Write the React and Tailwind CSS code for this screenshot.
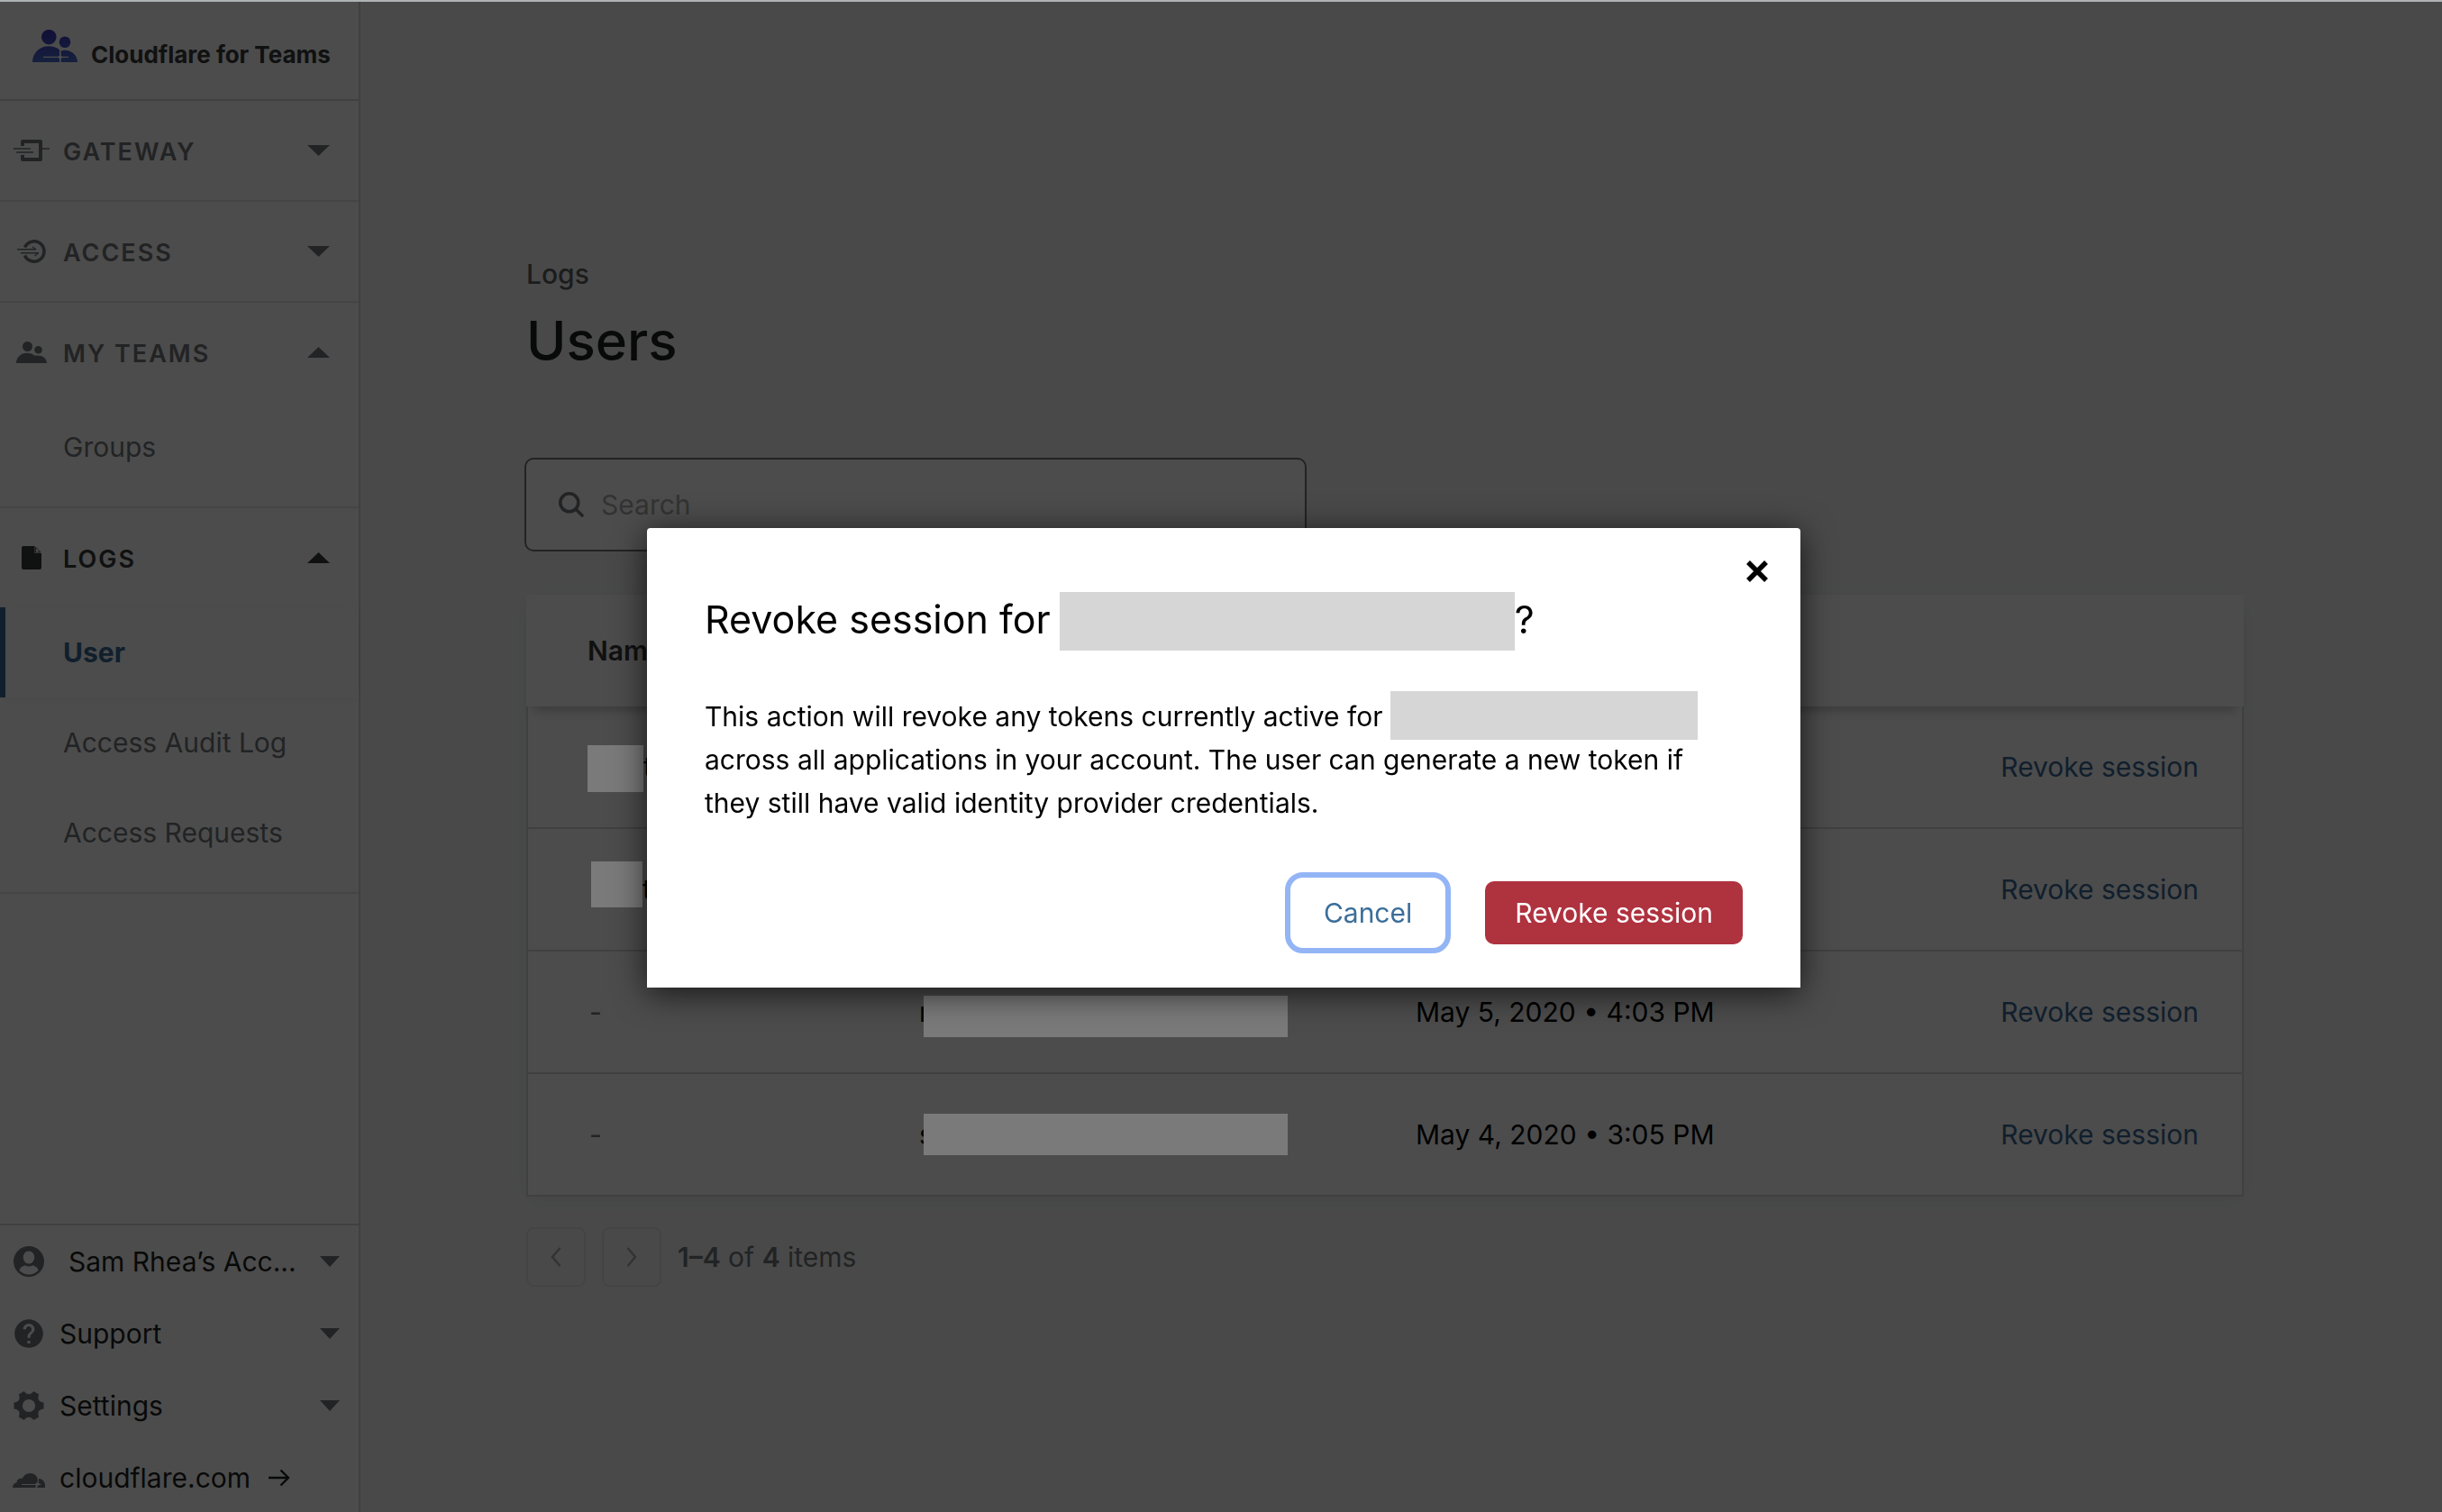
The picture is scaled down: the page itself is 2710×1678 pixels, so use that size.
import React from "react";
import { MdHelp } from "react-icons/md";

function Logo() {
  return (
    <svg className="mb-2.5 h-9 w-[50px] shrink-0" viewBox="0 0 50 36" aria-hidden="true">
      <defs>
        <linearGradient id="teams" x1="0" y1="0" x2="0" y2="36" gradientUnits="userSpaceOnUse">
          <stop offset="0" stopColor="#3a34b8" />
          <stop offset="1" stopColor="#4a6cd0" />
        </linearGradient>
      </defs>
      <g fill="url(#teams)">
        <circle cx="18.3" cy="8.2" r="8.3" />
        <circle cx="36" cy="13.7" r="6.3" />
        <path
          fillRule="evenodd"
          d="M0 36C0 26 8 18.3 18 18.3c4.600 0 8.800 1.400 12 4V28.500l-1.200 1.200H12v1.300h16.800l1.200 1.200V36zM31.700 36v-3.800l1.200-1.200H40v-1.300h-7.100l-1.200-1.200V23.400c1.300-.4 3-.6 4.300-.6C43.500 22.800 50 28.500 50 36z"
        />
      </g>
    </svg>
  );
}

function GatewayIcon() {
  return (
    <svg className="h-6 w-10" viewBox="0 0 40 24" fill="none" stroke="currentColor" aria-hidden="true">
      <path strokeWidth="4" strokeLinejoin="round" d="M10 7V2h20v20H10v-5" />
      <path strokeWidth="1.500" d="M0 10h19M3 14h19M32 10h8" />
    </svg>
  );
}

function AccessIcon() {
  return (
    <svg className="h-[26px] w-8" viewBox="0 0 32 26" fill="none" stroke="currentColor" aria-hidden="true">
      <path strokeWidth="3.600" d="M8.500 8.500A11.200 11.200 0 1 1 8.500 17.500" />
      <path strokeWidth="1.400" d="M0 10.800h21M4 14.800h20M17 8l4 2.800M19.500 18l4-3.200" />
    </svg>
  );
}

function TeamIcon() {
  return (
    <svg className="h-6 w-[34px]" viewBox="0 0 34 24" fill="currentColor" aria-hidden="true">
      <circle cx="12.500" cy="5.500" r="5.500" />
      <circle cx="24.500" cy="9.300" r="4.300" />
      <path d="M0 24C0 17.500 5.500 12.700 12 12.700c3.500 0 6.500 1 8.700 3C28 14.800 34 18 34 24z" />
    </svg>
  );
}

function FileIcon() {
  return (
    <svg className="h-[26px] w-[22px]" viewBox="0 0 22 26" fill="currentColor" aria-hidden="true">
      <path d="M2 0h12.500v8H22v16a2 2 0 0 1-2 2H2a2 2 0 0 1-2-2V2A2 2 0 0 1 2 0z" />
      <path d="M15.500 1.200V7h5.500z" fill="none" stroke="currentColor" strokeWidth=".8" />
    </svg>
  );
}

function UserIcon() {
  return (
    <svg className="size-[34px]" viewBox="0 0 34 34" fill="currentColor" aria-hidden="true">
      <path
        fillRule="evenodd"
        d="M17 0a17 17 0 1 1 0 34a17 17 0 0 1 0-34zM17 5.500c-3.600 0-6.200 2.900-6.200 6.800s2.600 7.200 6.200 7.200s6.200-3.300 6.200-7.200s-2.600-6.800-6.200-6.800zM6.500 26.700C9 29.800 12.800 31.500 17 31.500s8-1.700 10.500-4.800c-.8-3.200-3.600-4.700-6.500-5.400c-1.200.8-2.500 1.200-4 1.200s-2.800-.4-4-1.200c-2.900.7-5.700 2.200-6.500 5.400z"
      />
    </svg>
  );
}

function GearIcon() {
  return (
    <svg className="size-[34px]" viewBox="-17 -17 34 34" aria-hidden="true">
      <circle r="9.800" fill="none" stroke="currentColor" strokeWidth="5.400" />
      {[0, 60, 120, 180, 240, 300].map((a) => (
        <path key={a} transform={`rotate(${a})`} fill="currentColor" d="M10-6.500l4 2.500 2.500.6v6.800L14 4l-4 2.500z" />
      ))}
    </svg>
  );
}

function CloudIcon() {
  return (
    <svg className="h-4 w-9" viewBox="0 0 36 16" fill="currentColor" aria-hidden="true">
      <path
        fillRule="evenodd"
        d="M0 16c0-3 1.500-5.200 4.500-5.500C4.500 7.500 7 5 10.500 6C12.300 2 15.500 0 19.500 0C24.500 0 28 3.500 28 8.500l-1 2-2 1.500H10v1h15l1 .8-.8 2.200z"
      />
      <path d="M29 6c4 0 7 3.500 7 7.500V16h-9l1-2.500 4-1.200-3.300-1.300z" />
    </svg>
  );
}

function Caret({ up, small }) {
  return (
    <svg className={small ? "h-3 w-[22px]" : "h-3 w-[25px]"} viewBox="0 0 24 12" preserveAspectRatio="none" fill="currentColor" aria-hidden="true">
      <path d={up ? "M0 12L12 0l12 12z" : "M0 0h24L12 12z"} />
    </svg>
  );
}

function Chevron({ right }) {
  return (
    <svg className="h-[22px] w-3" viewBox="0 0 12 22" fill="none" stroke="currentColor" strokeWidth="2.600" aria-hidden="true">
      <path d={right ? "M1.500 1l8.500 10-8.500 10" : "M10.500 1L2 11l8.500 10"} />
    </svg>
  );
}

function Section({ icon, title, open, active, items = [] }) {
  return (
    <section className={"border-b-2 border-[#e6e7e8] " + (open ? "pb-4" : "")}>
      <button
        type="button"
        aria-expanded={!!open}
        className={"flex h-[110px] w-full items-center pr-8 text-left " + (active ? "text-[#36393a]" : "text-[#72777b]")}
      >
        <span className="flex w-[70px] justify-center">{icon}</span>
        <span className="flex-1 pt-[3px] text-[27px] leading-8 font-semibold tracking-[2px]">{title}</span>
        <Caret up={open} />
      </button>
      {items.map((item) => (
        <a
          key={item.label}
          href="#"
          className={
            "flex h-[100px] items-center border-l-6 pl-16 text-[30px] leading-10 " +
            (item.current
              ? "border-[#396896] font-bold text-[#396896] shadow-[0_2px_12px_rgba(0,0,0,0.05)]"
              : "border-transparent text-[#72777b]")
          }
        >
          {item.label}
        </a>
      ))}
    </section>
  );
}

function FooterRow({ icon, label, children }) {
  return (
    <button type="button" className="flex h-10 w-full items-center pr-[21px] pl-3.5 text-left">
      <span className="flex w-9 shrink-0 justify-center text-[#72777b]">{icon}</span>
      {label}
      {children}
    </button>
  );
}

function Sidebar() {
  return (
    <nav className="flex w-[400px] shrink-0 flex-col border-r-2 border-[#d5d7d8] bg-white">
      <a href="#" className="flex h-[110px] items-center gap-[15px] border-b-2 border-[#d5d7d8] pl-9 text-[#36393a]">
        <Logo />
        <span className="pt-2.5 text-[26px] leading-8 font-bold">Cloudflare for Teams</span>
      </a>
      <Section icon={<GatewayIcon />} title="GATEWAY" />
      <Section icon={<AccessIcon />} title="ACCESS" />
      <Section icon={<TeamIcon />} title="MY TEAMS" open items={[{ label: "Groups" }]} />
      <Section
        icon={<FileIcon />}
        title="LOGS"
        open
        active
        items={[{ label: "User", current: true }, { label: "Access Audit Log" }, { label: "Access Requests" }]}
      />
      <div className="mt-auto flex flex-col gap-10 border-t-2 border-[#d5d7d8] pt-5 pb-[18px] text-[30px] leading-10 text-[#1d1f20]">
        <FooterRow icon={<UserIcon />} label={<span className="flex-1 pl-[26px]">Sam Rhea’s Acc...</span>}>
          <span className="text-[#72777b]"><Caret small /></span>
        </FooterRow>
        <FooterRow icon={<MdHelp className="size-[38px] shrink-0" />} label={<span className="flex-1 pl-4">Support</span>}>
          <span className="text-[#72777b]"><Caret small /></span>
        </FooterRow>
        <FooterRow icon={<GearIcon />} label={<span className="flex-1 pl-4">Settings</span>}>
          <span className="text-[#72777b]"><Caret small /></span>
        </FooterRow>
        <a href="#" className="flex h-10 items-center pl-3.5">
          <span className="pt-1.5 text-[#72777b]"><CloudIcon /></span>
          <span className="pr-5 pl-4">cloudflare.com</span>
          <svg className="h-5 w-6" viewBox="0 0 24 20" fill="none" stroke="currentColor" strokeWidth="2.400" aria-hidden="true">
            <path d="M0 10h22M13.500 1.500L22 10l-8.500 8.500" />
          </svg>
        </a>
      </div>
    </nav>
  );
}

/* Blocks that hide private data; they stay visible over the dimmed page. */
function Redacted({ className }) {
  return <span className={"relative z-20 block shrink-0 bg-[#7a7a7a] " + className} />;
}

const rows = [
  { name: <><Redacted className="mt-1 h-[52px] w-[62px]" />t</> },
  { name: <><Redacted className="mb-3 ml-1 h-[51px] w-[57px]" />t</> },
  { name: "-", start: "r", block: "mt-2.5 h-[46px] w-[404px]", date: "May 5, 2020 • 4:03 PM" },
  { name: "-", start: "s", block: "h-[46px] w-[404px]", date: "May 4, 2020 • 3:05 PM" },
];

function UsersTable() {
  return (
    <table className="w-full table-fixed border-separate border-spacing-0 bg-white text-left text-[30px] leading-10 shadow-[0_4px_24px_rgba(0,0,0,0.06)]">
      <thead className="relative bg-white shadow-[0_12px_12px_-8px_rgba(0,0,0,0.25)]">
        <tr className="h-[124px]">
          <th scope="col" className="w-[436px] pl-[68px] font-semibold text-[#36393a]">Name</th>
          <td className="w-[551px]" />
          <td />
          <td className="w-[400px]" />
        </tr>
      </thead>
      <tbody>
        {rows.map((row, i) => (
          <tr key={i} className="h-[136px]">
            <td className="border-b-2 border-l-2 border-[#d5d7d8] pl-[66px]">
              <span className={"flex items-center " + (row.name === "-" ? "pl-0.5 text-[#72777b]" : "")}>{row.name}</span>
            </td>
            <td className="border-b-2 border-[#d5d7d8]">
              {row.start && (
                <span className="flex items-center">
                  <span className="w-[5px]">{row.start}</span>
                  <Redacted className={row.block} />
                </span>
              )}
            </td>
            <td className="border-b-2 border-[#d5d7d8]">{row.date}</td>
            <td className="border-r-2 border-b-2 border-[#d5d7d8] pr-12 text-right">
              <button type="button" className="text-[#396896]">Revoke session</button>
            </td>
          </tr>
        ))}
      </tbody>
    </table>
  );
}

function RevokeDialog() {
  return (
    <div className="fixed inset-0 z-30 flex items-center justify-center pt-1 pl-1.5">
      <div
        role="dialog"
        aria-modal="true"
        aria-labelledby="dialog-title"
        className="relative w-[1280px] max-w-full rounded-t-sm bg-white px-16 pt-[71px] pb-11 shadow-[0_6px_36px_rgba(0,0,0,0.7)]"
      >
        <button type="button" aria-label="Close" className="absolute top-9 right-9">
          <svg className="size-6" viewBox="0 0 24 24" stroke="currentColor" strokeWidth="5.500" aria-hidden="true">
            <path d="M2 2l20 20M22 2L2 22" />
          </svg>
        </button>
        <h2 id="dialog-title" className="flex items-center text-[43px] leading-[56px]">
          <span className="pb-1.5">Revoke session for</span>
          <span className="ml-2.5 h-[65px] w-[505px] bg-[#d6d6d6]" />
          <span className="pb-1.5">?</span>
        </h2>
        <p className="mt-[49px] text-[30px] leading-[48px]">
          This action will revoke any tokens currently active for{" "}
          <span className="-mt-5 -mb-3 inline-block h-[54px] w-[341px] bg-[#d6d6d6] align-middle" />{" "}
          across all applications in your account. The user can generate a new token if they still have valid identity
          provider credentials.
        </p>
        <div className="mt-[59px] flex items-center justify-end gap-11 text-[30px] leading-10">
          <button type="button" className="h-[78px] rounded-[14px] px-[37px] text-[#3b6e9a] outline-6 outline-[#93b5f6]">
            Cancel
          </button>
          <button type="button" className="h-[70px] rounded-[10px] bg-[#af323f] px-[33px] text-white">
            Revoke session
          </button>
        </div>
      </div>
    </div>
  );
}

export default function App() {
  return (
    <div className="font-['Inter',sans-serif]">
      <div className="flex min-h-screen bg-[#f5f6f6] pt-0.5">
        <Sidebar />
        <main className="min-w-0 flex-1 pt-[278px] pr-[220px] pl-[184px]">
          <p className="text-[30px] leading-[48px] font-medium text-[#5c6062]">Logs</p>
          <h1 className="mt-2.5 text-[60px] leading-20 font-medium text-[#1d1f20]">Users</h1>
          <label className="-mx-0.5 mt-[90px] flex h-[104px] w-[868px] items-center gap-[19px] rounded-[10px] border-2 border-[#72777b] bg-white pl-9">
            <svg className="size-7 shrink-0 text-[#72777b]" viewBox="0 0 28 28" fill="none" stroke="currentColor" strokeWidth="3.600" strokeLinecap="round" aria-label="Search users">
              <circle cx="11.800" cy="11.800" r="10" />
              <path d="M19.500 19.500l6.500 6.500" />
            </svg>
            <input type="text" placeholder="Search" className="w-full bg-transparent text-[30px] leading-10 outline-none placeholder:text-[#aaaaaa]" />
          </label>
          <div className="mt-12">
            <UsersTable />
          </div>
          <div className="mt-[34px] flex items-center text-[30px] leading-10 text-[#72777b]">
            <button type="button" aria-label="Previous page" className="mr-[18px] flex size-[66px] items-center justify-center rounded-lg border-2 border-[#e3e4e5] text-[#aaaaaa]">
              <Chevron />
            </button>
            <button type="button" aria-label="Next page" className="mr-[18px] flex size-[66px] items-center justify-center rounded-lg border-2 border-[#e3e4e5] text-[#aaaaaa]">
              <Chevron right />
            </button>
            <p>
              <b className="font-semibold">1–4</b> of <b className="font-semibold">4</b> items
            </p>
          </div>
        </main>
      </div>
      <div className="fixed inset-0 z-10 bg-black/70" />
      <div className="fixed inset-x-0 top-0 z-20 h-0.5 bg-[#b0b3b4]" />
      <RevokeDialog />
    </div>
  );
}
